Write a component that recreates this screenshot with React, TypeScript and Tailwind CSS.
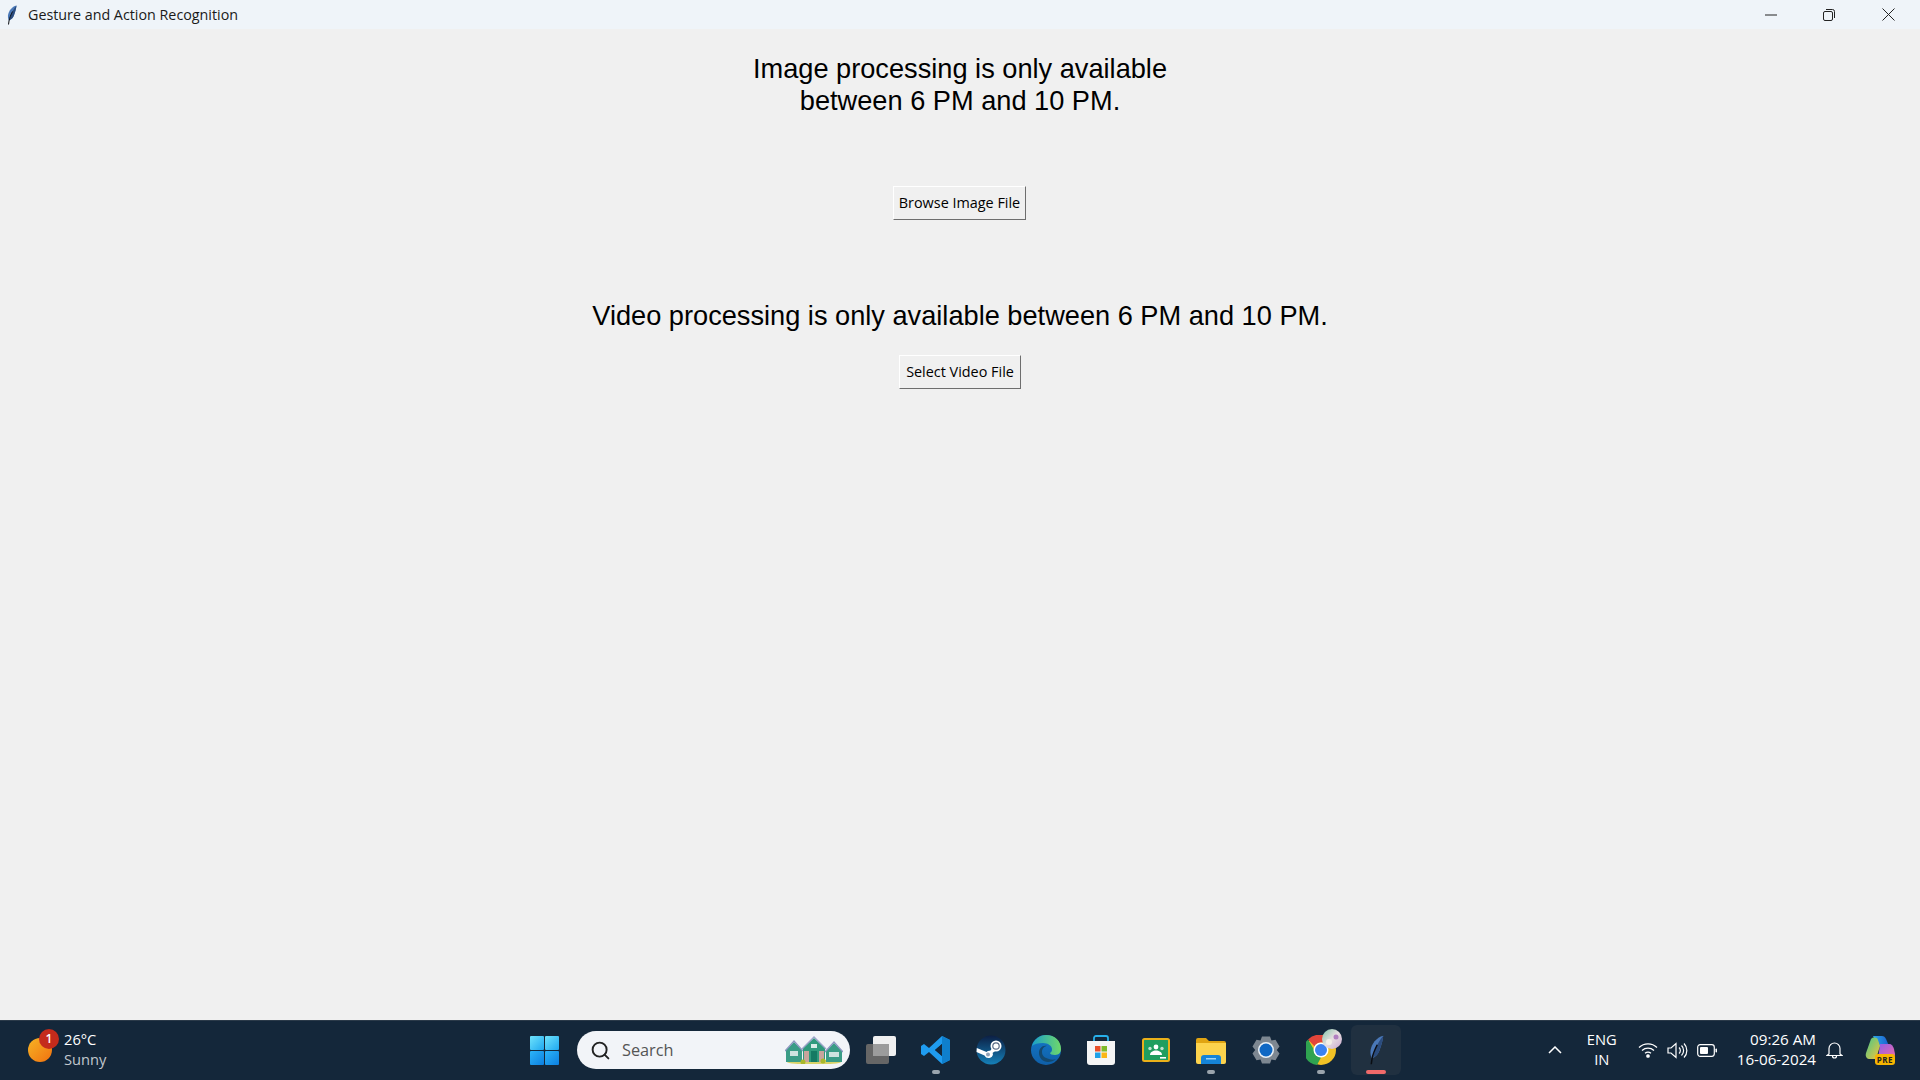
import { Search } from 'lucide-react';

const SEGOE = 'font-["Open_Sans","Noto_Sans",sans-serif]';

function Feather(props: { className: string }) {
    return (
        <svg viewBox="0 0 20 40" className={props.className}>
            <path d="M19 1C10 3 3 12 2 21c-.4 4 .4 7 1.500 10 5-1 9-6 11-12 2-6 4-12 4.500-18z" fill="#4a78b8" />
            <path d="M19 1C14 7 10 14 8 21l-3 9c4-1 8-5 9.500-11 2-6 4-12 4.500-18z" fill="#2b4c7e" />
            <path d="M11 13C8 19 5 26 4 32l-1 7" stroke="#0a0d12" strokeWidth="2" fill="none" />
        </svg>
    );
}

function TitleBar() {
    return (
        <div className="flex h-[29px] items-center bg-[#eff4f9]">
            <Feather className="ml-[7px] h-[20px] w-[10px]" />
            <span className={`ml-[11px] text-[14.3px] text-[#1a1a1a] ${SEGOE}`}>Gesture and Action Recognition</span>
            <div className="ml-auto flex h-full items-center">
                <div className="flex w-[62px] justify-center">
                    <svg width="12" height="2" viewBox="0 0 12 2"><path d="M0 1h12" stroke="#222" strokeWidth="1" /></svg>
                </div>
                <div className="flex w-[54px] justify-center">
                    <svg width="12" height="12" viewBox="0 0 12 12" fill="none" stroke="#222" strokeWidth="1">
                        <rect x=".5" y="2.5" width="9" height="9" rx="1.5" />
                        <path d="M3 .5h6.500a2 2 0 0 1 2 2V9" />
                    </svg>
                </div>
                <div className="flex w-[64px] justify-center">
                    <svg width="13" height="13" viewBox="0 0 13 13"><path d="M.5.5l12 12M12.500.5l-12 12" stroke="#222" strokeWidth="1" /></svg>
                </div>
            </div>
        </div>
    );
}

function TkButton(props: { label: string, width: string }) {
    return (
        <button className={`h-[34px] ${props.width} border-[1.5px] border-t-white border-l-white border-r-[#6e6e6e] border-b-[#6e6e6e] bg-[#f0f0f0] text-[14.4px] text-black ${SEGOE}`}>
            {props.label}
        </button>
    );
}

function WinLogo() {
    return (
        <svg width="29" height="29" viewBox="0 0 29 29">
            <defs>
                <linearGradient id="w1" x1="0" y1="0" x2="1" y2="1"><stop offset="0" stopColor="#6fe3fb" /><stop offset="1" stopColor="#1fa8f0" /></linearGradient>
                <linearGradient id="w2" x1="0" y1="0" x2="1" y2="1"><stop offset="0" stopColor="#2cb4f8" /><stop offset="1" stopColor="#0c7fe0" /></linearGradient>
            </defs>
            <rect width="14" height="14" rx="1" fill="url(#w1)" />
            <rect x="15" width="14" height="14" rx="1" fill="url(#w1)" />
            <rect y="15" width="14" height="14" rx="1" fill="url(#w2)" />
            <rect x="15" y="15" width="14" height="14" rx="1" fill="url(#w2)" />
        </svg>
    );
}

function Houses() {
    return (
        <svg width="58" height="28" viewBox="0 0 58 28">
            <ellipse cx="29" cy="26" rx="27" ry="2.500" fill="#d9d36a" />
            <path d="M1 14L9 6l8 8v12H1z" fill="#3a9c86" />
            <path d="M0 15L9 5l9 10" fill="none" stroke="#8d97c0" strokeWidth="1.400" />
            <rect x="5" y="15" width="8" height="5" fill="#cfe3df" />
            <path d="M18 12L29 2l11 10v14H18z" fill="#2f9a7c" />
            <path d="M17 13L29 1l12 12" fill="none" stroke="#9aa3c8" strokeWidth="1.400" />
            <rect x="19" y="15" width="5" height="11" fill="#c8a49c" />
            <rect x="34" y="15" width="5" height="11" fill="#c8a49c" />
            <rect x="26" y="15" width="6" height="11" fill="#157a63" />
            <rect x="26" y="8" width="6" height="4" fill="#d8ece6" />
            <path d="M41 15l8-8 8 8v11H41z" fill="#3a9c86" />
            <path d="M40 16l9-10 9 10" fill="none" stroke="#8d97c0" strokeWidth="1.400" />
            <rect x="44" y="16" width="10" height="5" fill="#cfe3df" />
            <circle cx="18" cy="26" r="2.500" fill="#a9b82c" />
            <circle cx="38" cy="25" r="2.500" fill="#a9b82c" />
        </svg>
    );
}

function VsCode() {
    return (
        <svg width="30" height="30" viewBox="0 0 30 30">
            <path d="M21 1l8 4v20l-8 4L8 17l-5 4-3-2v-8l3-2 5 4zm0 8l-7 6 7 6z" fill="#1f9cf0" />
            <path d="M21 1l8 4v20l-8 4z" fill="#0f7fcc" />
            <path d="M21 9v12l-7-6z" fill="#14273a" />
        </svg>
    );
}

function Steam() {
    return (
        <svg width="30" height="30" viewBox="0 0 30 30">
            <defs>
                <linearGradient id="st" x1="0" y1="0" x2="0" y2="1"><stop offset="0" stopColor="#0c1f44" /><stop offset="1" stopColor="#1580b8" /></linearGradient>
            </defs>
            <circle cx="15" cy="15" r="14.500" fill="url(#st)" />
            <path d="M.5 17l8 3.500a4.500 4.500 0 0 0 8.500-1.500l-.5-1 4-3-3-4-3 4.500-1 .2a4.500 4.500 0 0 0-3 1.300L.8 13z" fill="#fff" />
            <circle cx="20" cy="11" r="5.500" fill="#fff" />
            <circle cx="20" cy="11" r="3.800" fill="#5a6b85" />
            <circle cx="20" cy="11" r="2.600" fill="#fff" />
            <circle cx="12" cy="19.500" r="2" fill="#8fa2b8" />
        </svg>
    );
}

function Edge() {
    return (
        <svg width="30" height="30" viewBox="0 0 30 30">
            <defs>
                <linearGradient id="e1" x1="0" y1="0" x2="1" y2="0"><stop offset="0" stopColor="#1aa0c8" /><stop offset="1" stopColor="#6fd86a" /></linearGradient>
                <linearGradient id="e2" x1="0" y1="0" x2="0" y2="1"><stop offset="0" stopColor="#1478c8" /><stop offset="1" stopColor="#0f5fa8" /></linearGradient>
            </defs>
            <circle cx="15" cy="15" r="15" fill="url(#e2)" />
            <path d="M1 11C3 4 9 0 15 0c9 0 15 6 15 14 0 3-2 6-6 6-3 0-5-1-5-2 2-1 2-3 2-4 0-3-4-6-9-6-5 0-9 1-11 3z" fill="url(#e1)" />
            <path d="M11 17c0-4 3-6 5-6-5-1-8 3-8 7 0 5 4 9 9 9 3 0 6-1 8-3-2 1-5 1-7 0-4-1-7-3-7-7z" fill="#14496f" />
        </svg>
    );
}

function Store() {
    return (
        <svg width="30" height="30" viewBox="0 0 30 30">
            <path d="M8 7V3a2 2 0 0 1 2-2h10a2 2 0 0 1 2 2v4" fill="none" stroke="#27b0ea" strokeWidth="1.800" />
            <path d="M1 6h28v21a3 3 0 0 1-3 3H4a3 3 0 0 1-3-3z" fill="#f5f5f5" />
            <rect x="9" y="11" width="5.500" height="5.500" fill="#e8502a" />
            <rect x="15.500" y="11" width="5.500" height="5.500" fill="#7fba29" />
            <rect x="9" y="17.500" width="5.500" height="5.500" fill="#1ea1e8" />
            <rect x="15.500" y="17.500" width="5.500" height="5.500" fill="#fbb616" />
        </svg>
    );
}

function Classroom() {
    return (
        <svg width="28" height="24" viewBox="0 0 28 24">
            <rect x="1" y="1" width="26" height="22" rx="1.500" fill="#1f9e5f" stroke="#eab11a" strokeWidth="2" />
            <circle cx="14" cy="9" r="2.400" fill="#fff" />
            <circle cx="8" cy="10.500" r="1.700" fill="#bfe3cf" />
            <circle cx="20" cy="10.500" r="1.700" fill="#bfe3cf" />
            <path d="M8 17c0-3 3-4.500 6-4.500s6 1.500 6 4.500z" fill="#fff" />
            <rect x="18" y="19" width="6" height="1.600" fill="#fff" />
        </svg>
    );
}

function Files() {
    return (
        <svg width="30" height="27" viewBox="0 0 30 27">
            <path d="M0 3a2 2 0 0 1 2-2h8l3 3h15a2 2 0 0 1 2 2v4H0z" fill="#e0a412" />
            <path d="M0 6h30v19a2 2 0 0 1-2 2H2a2 2 0 0 1-2-2z" fill="#fcd34d" />
            <path d="M5 21a3 3 0 0 1 3-3h14a3 3 0 0 1 3 3v6H5z" fill="#1584d8" />
            <rect x="10" y="21" width="10" height="1.500" fill="#9fd4f5" />
        </svg>
    );
}

function Gear() {
    return (
        <svg width="30" height="30" viewBox="0 0 30 30">
            <path d="M11 1.500h8l1.500 4 4-.8 4 6.800-2.700 3.500 2.700 3.500-4 6.800-4-.8-1.500 4h-8l-1.500-4-4 .8-4-6.800L4.200 15 1.500 11.500l4-6.800 4 .8z" fill="#7d8791" />
            <circle cx="15" cy="15" r="8" fill="#eaf1f7" />
            <circle cx="15" cy="15" r="6.500" fill="#0f68c4" />
        </svg>
    );
}

function Chrome() {
    return (
        <div className="relative h-[30px] w-[30px]">
            <svg width="30" height="30" viewBox="0 0 30 30">
                <circle cx="15" cy="15" r="15" fill="#f2c225" />
                <path d="M15 0a15 15 0 0 1 13 7.500H15a7.500 7.500 0 0 0-6.500 3.750L2 4.500A15 15 0 0 1 15 0z" fill="#e2453a" />
                <path d="M2 4.500l6.500 11A7.500 7.500 0 0 0 15 22.500L11 30A15 15 0 0 1 2 4.500z" fill="#2fa350" />
                <circle cx="15" cy="15" r="7.500" fill="#fff" />
                <circle cx="15" cy="15" r="6" fill="#3b82f0" />
            </svg>
            <svg width="20" height="20" viewBox="0 0 20 20" className="absolute -top-[6px] -right-[6px]">
                <defs>
                    <linearGradient id="ch" x1="0" y1="0" x2="1" y2="1"><stop offset="0" stopColor="#7fc4a8" /><stop offset=".5" stopColor="#e8dfe0" /><stop offset="1" stopColor="#c9a8d0" /></linearGradient>
                </defs>
                <circle cx="10" cy="10" r="10" fill="url(#ch)" />
                <circle cx="7" cy="13" r="3" fill="#f3efe6" />
                <circle cx="14" cy="8" r="2.500" fill="#b07fc0" />
            </svg>
        </div>
    );
}

function Copilot() {
    return (
        <div className="relative h-[30px] w-[30px]">
            <svg width="30" height="26" viewBox="0 0 30 26">
                <defs>
                    <linearGradient id="c1" x1="0" y1="0" x2="1" y2="0"><stop offset="0" stopColor="#2aa5e8" /><stop offset="1" stopColor="#1c5fd0" /></linearGradient>
                    <linearGradient id="c2" x1="0" y1="0" x2="1" y2="1"><stop offset="0" stopColor="#8f5fe8" /><stop offset="1" stopColor="#f06aa8" /></linearGradient>
                    <linearGradient id="c3" x1="0" y1="0" x2="1" y2="1"><stop offset="0" stopColor="#45c78a" /><stop offset="1" stopColor="#f4c53a" /></linearGradient>
                </defs>
                <path d="M8 1h9c2 0 3 1 4 3l3 7H13z" fill="url(#c1)" />
                <path d="M15 9h9c3 0 4 2 5 5l1 5c0 3-2 5-5 5H13z" fill="url(#c2)" />
                <path d="M6 4c2-2 6-2 7 1l2 6-4 13H5c-3 0-5-2-4-6z" fill="url(#c3)" />
            </svg>
            <span className={`absolute right-0 bottom-0 rounded-[3px] bg-[#f7b500] px-[2px] text-[8px] leading-[11px] font-bold tracking-[0.5px] text-[#222] ${SEGOE}`}>PRE</span>
        </div>
    );
}

function Tile(props: { children: React.ReactNode, dot?: boolean }) {
    return (
        <div className="relative flex h-[50px] w-[55px] items-center justify-center">
            {props.children}
            {props.dot && <div className="absolute bottom-[1px] h-[4px] w-[8px] rounded-full bg-[#9aa4ad]" />}
        </div>
    );
}

function Taskbar() {
    return (
        <div className="grid h-[60px] grid-cols-[1fr_auto_1fr] items-center border-t border-[#2b3a49] bg-[#14273a] pb-[1px] text-white">
            <div className="flex items-center pl-[28px]">
                <div className="relative h-[24px] w-[24px] rounded-full bg-gradient-to-br from-[#f5b324] to-[#f0700f]">
                    <span className={`absolute -top-[9px] left-[11px] flex h-[20px] w-[20px] items-center justify-center rounded-full bg-[#c42b1c] text-[12px] font-semibold ${SEGOE}`}>1</span>
                </div>
                <div className={`-mt-[2px] ml-[12px] text-[14.7px] leading-[20px] ${SEGOE}`}>
                    <div>26°C</div>
                    <div className="text-[#c2c8ce]">Sunny</div>
                </div>
            </div>

            <div className="flex items-center">
                <div className="relative flex h-[50px] w-[55px] items-center justify-center pl-[1px]"><WinLogo /></div>
                <div className={`ml-[6px] mr-[3px] flex h-[38px] w-[273px] items-center rounded-full bg-[#f2f4f8] pl-[13px] pr-[7px] ${SEGOE}`}>
                    <Search size={21} strokeWidth={2.2} className="text-[#222]" />
                    <span className="ml-[11px] text-[16.3px] text-[#555]">Search</span>
                    <div className="ml-auto"><Houses /></div>
                </div>
                <div className="relative h-[50px] w-[55px]">
                    <div className="absolute left-[13px] top-[19px] h-[20px] w-[23px] rounded-[2px] bg-[#666]" />
                    <div className="absolute left-[20px] top-[11px] h-[20px] w-[23px] rounded-[2px] bg-[#f0f0f0]" />
                    <div className="absolute left-[20px] top-[19px] h-[12px] w-[16px] bg-[#9c9c9c]" />
                </div>
                <Tile dot><VsCode /></Tile>
                <Tile><Steam /></Tile>
                <Tile><Edge /></Tile>
                <Tile><Store /></Tile>
                <Tile><Classroom /></Tile>
                <Tile dot><Files /></Tile>
                <Tile><Gear /></Tile>
                <Tile dot><Chrome /></Tile>
                <div className="relative mx-[3px] flex h-[50px] w-[50px] items-center justify-center rounded-[6px] bg-[#203040]">
                    <Feather className="h-[30px] w-[15px]" />
                    <div className="absolute bottom-[1px] h-[4px] w-[20px] rounded-full bg-[#f06a6a]" />
                </div>
            </div>

            <div className={`flex items-center justify-end pr-[25px] ${SEGOE}`}>
                <svg width="14" height="8" viewBox="0 0 14 8" fill="none" stroke="#fff" strokeWidth="1.500"><path d="M1 7l6-6 6 6" /></svg>
                <div className="-mt-[2px] ml-[18px] w-[44px] text-center text-[14.7px] leading-[20px]">
                    <div>ENG</div>
                    <div>IN</div>
                </div>
                <svg className="ml-[14px]" width="20" height="16" viewBox="0 0 20 16" fill="none" stroke="#fff" strokeWidth="1.300">
                    <path d="M1 5.500a13 13 0 0 1 18 0M4 8.500a9 9 0 0 1 12 0M7 11.200a5 5 0 0 1 6 0" />
                    <circle cx="10" cy="14" r="1.200" fill="#fff" />
                </svg>
                <svg className="ml-[9px]" width="21" height="17" viewBox="0 0 21 17" fill="none" stroke="#fff" strokeWidth="1.200">
                    <path d="M1 6h3l5-4.500v14L4 11H1z" />
                    <path d="M12 5.500a4 4 0 0 1 0 6M14.500 3.500a7 7 0 0 1 0 10M17 1.500a10 10 0 0 1 0 14" />
                </svg>
                <svg className="ml-[9px]" width="20" height="13" viewBox="0 0 20 13" fill="none">
                    <rect x=".7" y=".7" width="16.600" height="11.600" rx="2.500" stroke="#fff" strokeWidth="1.200" />
                    <rect x="3" y="3" width="8" height="7" rx="1" fill="#fff" />
                    <rect x="18.500" y="4.500" width="1.500" height="4" rx=".7" fill="#fff" />
                </svg>
                <div className="-mt-[2px] ml-[20px] text-right text-[15.2px] leading-[20px]">
                    <div>09:26 AM</div>
                    <div>16-06-2024</div>
                </div>
                <svg className="ml-[10px]" width="17" height="18" viewBox="0 0 17 18" fill="none" stroke="#fff" strokeWidth="1.200">
                    <path d="M3 13V7.500a5.500 5.500 0 0 1 11 0V13l2 1.500H1z" />
                    <path d="M6.500 15a2 2 0 0 0 4 0" />
                </svg>
                <div className="ml-[22px]"><Copilot /></div>
            </div>
        </div>
    );
}

export default function App() {
    return (
        <div className="flex h-screen w-full flex-col overflow-hidden bg-[#f0f0f0]">
            <TitleBar />
            <main className="flex flex-1 flex-col items-center pt-[24px] font-['Liberation_Sans',Arial,sans-serif] text-[27.2px] leading-[32px] text-black">
                <p className="text-center">Image processing is only available<br />between 6 PM and 10 PM.</p>
                <div className="mt-[66px] mr-[1px]"><TkButton label="Browse Image File" width="w-[133px]" /></div>
                <p className="mt-[80px] text-center">Video processing is only available between 6 PM and 10 PM.</p>
                <div className="mt-[20px]"><TkButton label="Select Video File" width="w-[122px]" /></div>
            </main>
            <Taskbar />
        </div>
    );
}
